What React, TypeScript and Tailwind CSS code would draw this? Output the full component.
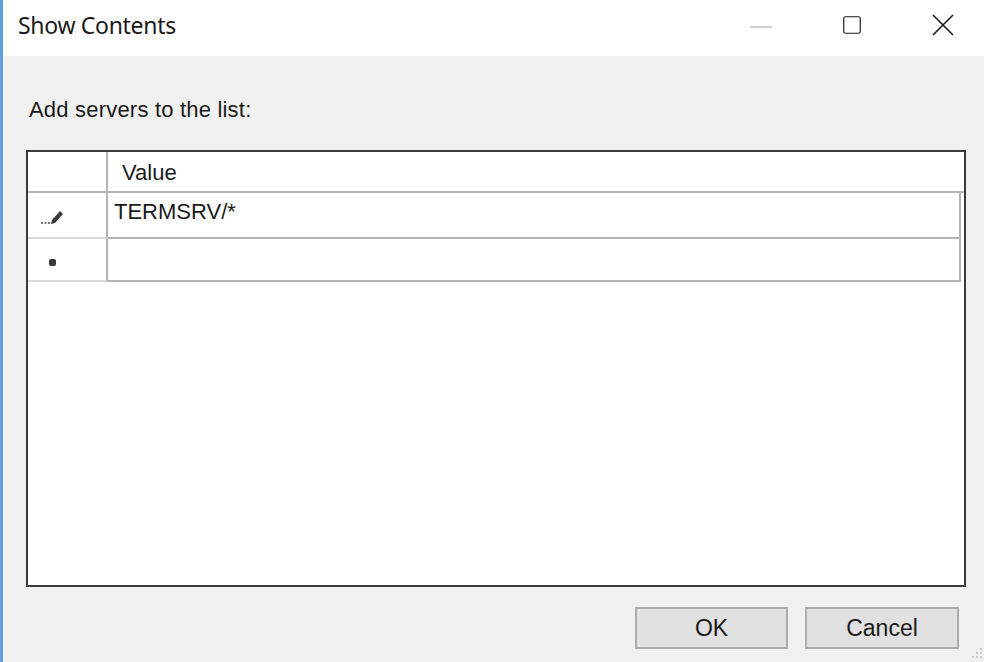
import { Square } from 'lucide-react';

const rowLine = 'border-b-2 border-[#b4b4b4]';

function Pencil() {
  return (
    <svg width="24" height="18" viewBox="0 0 24 18" className="text-[#3a3a3a]">
      <rect x="1" y="14" width="2" height="2" fill="currentColor" opacity="0.7" />
      <rect x="4.5" y="14" width="2" height="2" fill="currentColor" opacity="0.7" />
      <rect x="8" y="14" width="2" height="2" fill="currentColor" opacity="0.7" />
      <path d="M11 16 L12 12 L20 3 L23 6 L15 15 Z" fill="currentColor" />
    </svg>
  );
}

function CloseGlyph() {
  return (
    <svg width="22" height="22" viewBox="0 0 22 22" className="text-[#1a1a1a]">
      <path d="M1 1 L21 21 M21 1 L1 21" stroke="currentColor" strokeWidth="1.6" fill="none" />
    </svg>
  );
}

export default function App() {
  return (
    <div
      className="w-[984px] h-[662px] flex flex-col border-l-[3px] border-[#5b9ee2] bg-[#f0f0f0] overflow-hidden relative"
      style={{ fontFamily: '"Liberation Sans", Arial, sans-serif' }}
    >
      {/* Title bar */}
      <div className="h-[56px] bg-white flex items-center shrink-0">
        <div
          className="pl-[15px] pb-[6px] text-[23px] text-[#1a1a1a] tracking-[-0.3px]"
          style={{ fontFamily: '"Noto Sans", "Open Sans", sans-serif' }}
        >
          Show Contents
        </div>
        <div className="ml-auto flex items-center pr-[30px] pb-[6px]">
          <div className="w-[22px] h-[2px] bg-[#cfcfcf] mt-[4px]" />
          <Square className="ml-[69px] w-[22px] h-[22px] text-[#1a1a1a]" strokeWidth={1.3} absoluteStrokeWidth />
          <div className="ml-[69px]">
            <CloseGlyph />
          </div>
        </div>
      </div>

      {/* Body */}
      <div className="flex-1 flex flex-col pl-[23px] pr-[18px]">
        <div className="mt-[42px] pl-[3px] text-[22px] leading-[24px] text-[#1a1a1a] tracking-[0.2px]">
          Add servers to the list:
        </div>

        <div className="mt-[28px] w-[940px] h-[437px] border-2 border-[#3a3a3a] bg-white flex flex-col">
          {/* Header row */}
          <div className={`flex h-[41px] ${rowLine}`}>
            <div className="w-[80px] border-r-2 border-[#b4b4b4]" />
            <div className="flex-1 flex items-center pl-[14px] pt-[1px] text-[22px] text-[#1a1a1a]">Value</div>
          </div>
          {/* Row 1 */}
          <div className="flex h-[46px]">
            <div className="w-[80px] border-r-2 border-[#b4b4b4] border-b-2 border-b-[#d8d8d8] flex items-center pl-[12px] pt-[4px]">
              <Pencil />
            </div>
            <div className={`flex-1 flex items-center pl-[6px] pb-[8px] text-[22px] text-[#1a1a1a] mr-[3px] border-r-2 border-[#b4b4b4] ${rowLine}`}>
              TERMSRV/*
            </div>
          </div>
          {/* New row */}
          <div className="flex h-[43px]">
            <div className="w-[80px] border-r-2 border-[#b4b4b4] border-b-2 border-b-[#d8d8d8] flex items-center pl-[21px] pt-[6px]">
              <div className="w-[7px] h-[7px] rounded-[2px] bg-[#3a3a3a]" />
            </div>
            <div className={`flex-1 mr-[3px] border-r-2 border-[#b4b4b4] ${rowLine}`} />
          </div>
        </div>

        {/* Buttons */}
        <div className="mt-[20px] flex justify-end gap-[17px] pr-[7px]">
          <button className="w-[153px] h-[42px] bg-[#e1e1e1] border-2 border-[#adadad] text-[23px] text-[#1a1a1a]">
            OK
          </button>
          <button className="w-[154px] h-[42px] bg-[#e1e1e1] border-2 border-[#adadad] text-[23px] text-[#1a1a1a]">
            Cancel
          </button>
        </div>
      </div>

      {/* Resize grip */}
      <svg className="absolute right-[1px] bottom-[2px]" width="14" height="14" viewBox="0 0 14 14">
        {[
          [11, 2],
          [7, 6],
          [11, 6],
          [3, 10],
          [7, 10],
          [11, 10],
        ].map(([x, y]) => (
          <rect key={`${x}-${y}`} x={x} y={y} width="2" height="2" fill="#c8c8c8" />
        ))}
      </svg>
    </div>
  );
}
